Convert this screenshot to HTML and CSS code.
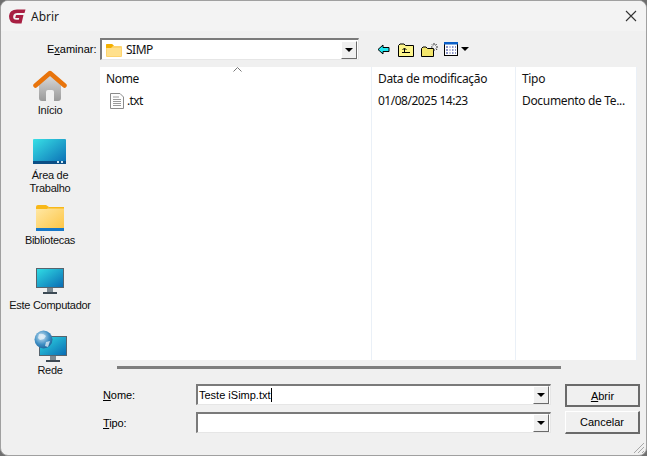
FILE: index.html
```html
<!DOCTYPE html>
<html lang="pt">
<head>
<meta charset="utf-8">
<title>Abrir</title>
<link rel="stylesheet" href="styles.css">
</head>
<body>
<div class="window">
  <header class="titlebar">
    <svg class="app-icon" width="17" height="15" viewBox="0 0 17 15">
      <path d="M16.500 .5H8Q.5 .5 0 7Q0 14.500 7 14.500H12.500L14.500 6H7L6.200 9H10.200L9.800 10.800H7.500Q3.800 10.800 4.200 7.300Q4.800 4 8.500 4H15.500Z" fill="#a81f42"/>
    </svg>
    <span class="title">Abrir</span>
    <svg class="close" width="12" height="12" viewBox="0 0 12 12"><path d="M1 1L11 11M11 1L1 11" stroke="#333" stroke-width="1.1" fill="none"/></svg>
  </header>

  <div class="lookin">
    <label class="lookin-label">E<u>x</u>aminar:</label>
    <div class="combo combo-lookin">
      <svg width="16" height="14" viewBox="0 0 16 14"><path d="M0 2Q0 1 1 1H6L8 3H15Q16 3 16 4V13Q16 14 15 14H1Q0 14 0 13Z" fill="#fdd36e"/><path d="M0 2Q0 1 1 1H6L8 3H7L5 5H0Z" fill="#f4b000"/><path d="M1 5H15V13H1Z" fill="#ffe08c"/></svg>
      <span class="combo-text">SIMP</span>
      <span class="combo-btn"><i></i></span>
    </div>
    <div class="tools">
      <svg width="13" height="11" viewBox="0 0 13 11"><path d="M6 1V3.500H12V7.500H6V10L1 5.500Z" fill="#1fe6f0" stroke="#000"/></svg>
      <svg width="16" height="15" viewBox="0 0 16 15"><path d="M.5 14.500V3.500L2 2H6L7.500 3.500H15.500V14.500Z" fill="#fdf58c" stroke="#000"/><path d="M4 10.500H12M6.500 10.500V6.500M4.500 8L6.500 6L8.500 8" stroke="#000" fill="none"/></svg>
      <svg class="tool-new" width="18" height="15" viewBox="0 0 18 15"><path d="M.5 14.500V6.500L2 5H5L6.500 6.500H12.500V14.500Z" fill="#f3e66c" stroke="#000"/><path d="M13 1V3M13 7V9M10 5H11.500M15 5H17M11 2.500L12 3.500M15.500 2L14.500 3.500M15 6.500L16 8" stroke="#333" fill="none"/></svg>
      <span class="view-tool">
        <svg width="14" height="14" viewBox="0 0 14 14"><rect x=".5" y=".5" width="13" height="13" fill="#fff" stroke="#000"/><rect x="0" y="0" width="14" height="2.500" fill="#0a5fc8"/><path d="M2 5H4M5.500 5H6.500M8 5H9.500M11 5H12M2 8H4M5.500 8H6.500M8 8H9.500M11 8H12M2 11H4M5.500 11H6.500M8 11H9.500M11 11H12" stroke="#1a2c90"/></svg>
        <i></i>
      </span>
    </div>
  </div>

  <div class="middle">
    <nav class="places">
      <div class="place place-home">
        <svg width="34" height="32" viewBox="0 0 34 32">
          <defs><linearGradient id="g1" x1="0" y1="0" x2="0" y2="1"><stop offset="0" stop-color="#dcdcdc"/><stop offset="1" stop-color="#9a9a9a"/></linearGradient></defs>
          <path d="M6 14L17 4L28 14V28Q28 31 25 31H21V22Q21 20 19 20H15Q13 20 13 22V31H9Q6 31 6 28Z" fill="url(#g1)"/>
          <path d="M2.500 15.500L17 3L31.500 15.500" fill="none" stroke="#e8740c" stroke-width="4.500" stroke-linecap="round" stroke-linejoin="round"/>
        </svg>
        <span>Início</span>
      </div>
      <div class="place place-desk">
        <svg width="33" height="25" viewBox="0 0 33 25">
          <defs><linearGradient id="g2" x1="0" y1="0" x2="1" y2="1"><stop offset="0" stop-color="#38e0e6"/><stop offset="1" stop-color="#0a6cb4"/></linearGradient></defs>
          <path d="M1 0H32Q33 0 33 1V25H0V1Q0 0 1 0Z" fill="url(#g2)"/>
          <rect y="22" width="33" height="3" fill="#0b4f86"/>
          <path d="M24 22h2v2h-2zM28 22h2v2h-2z" fill="#cfe8f5"/>
        </svg>
        <span>Área de<br>Trabalho</span>
      </div>
      <div class="place place-lib">
        <svg width="28" height="26" viewBox="0 0 28 26">
          <defs><linearGradient id="g3" x1="0" y1="0" x2="1" y2="1"><stop offset="0" stop-color="#ffe9a8"/><stop offset="1" stop-color="#fdc545"/></linearGradient></defs>
          <path d="M0 2Q0 0 2 0H10L13 2V4H0Z" fill="#f8b818"/>
          <path d="M0 4H11L13 2H28V24H0Z" fill="url(#g3)"/>
          <path d="M11 3.500L13 2H28V3.500Z" fill="#f8b818"/>
          <rect y="23" width="28" height="3" fill="#1878c8"/>
        </svg>
        <span>Bibliotecas</span>
      </div>
      <div class="place place-pc">
        <svg width="28" height="26" viewBox="0 0 28 26">
          <use href="#monitor"/>
        </svg>
        <span>Este Computador</span>
      </div>
      <div class="place place-net">
        <svg width="33" height="32" viewBox="0 0 33 32">
          <defs>
            <linearGradient id="g4" x1="0" y1="0" x2="1" y2="1"><stop offset="0" stop-color="#30dce4"/><stop offset="1" stop-color="#0a6cb4"/></linearGradient>
            <radialGradient id="g5" cx=".4" cy=".35" r=".7"><stop offset="0" stop-color="#cfe6f5"/><stop offset=".6" stop-color="#3f8fc4"/><stop offset="1" stop-color="#1d5f96"/></radialGradient>
            <g id="monitor">
              <rect width="28" height="20" fill="#56646e"/>
              <rect x="1" y="1" width="26" height="18" fill="url(#g4)"/>
              <rect x="11" y="20" width="6" height="4" fill="#7d8a92"/>
              <rect x="7" y="24" width="14" height="2" fill="#3d4a54"/>
            </g>
          </defs>
          <use href="#monitor" x="5" y="6"/>
          <circle cx="9.500" cy="9.500" r="9" fill="url(#g5)"/>
          <path d="M5 4Q9 3 12 6L10 9L6 10L4 8ZM12 12L16 11L14 17L11 16Z" fill="#e8f3fa" opacity=".75"/>
        </svg>
        <span>Rede</span>
      </div>
    </nav>
    <section class="list">
      <div class="cols col-name">
        <svg class="sort" width="9" height="5" viewBox="0 0 9 5"><path d="M.5 4.500L4.500 .5L8.500 4.500" fill="none" stroke="#777"/></svg>
        <div class="col-head">Nome</div>
        <div class="cell file-cell">
          <svg width="14" height="16" viewBox="0 0 14 16"><path d="M.5 .5H10L13.500 4V15.500H.5Z" fill="#fdfdfd" stroke="#8a8a8a"/><path d="M3 4H9M3 6.500H11M3 8.500H11M3 10.500H11M3 12.500H11" stroke="#9a9a9a"/></svg>
          <span>.txt</span>
        </div>
      </div>
      <div class="cols col-date">
        <div class="col-head">Data de modificação</div>
        <div class="cell cell-date">01/08/2025 14:23</div>
      </div>
      <div class="cols col-type">
        <div class="col-head">Tipo</div>
        <div class="cell">Documento de Te...</div>
      </div>
    </section>
  </div>

  <div class="hscroll"></div>

  <div class="form">
    <div class="fields">
      <div class="field">
        <label><u>N</u>ome:</label>
        <div class="combo combo-field"><span class="combo-text input-text">Teste iSimp.txt</span><span class="combo-btn"><i></i></span></div>
      </div>
      <div class="field">
        <label><u>T</u>ipo:</label>
        <div class="combo combo-field"><span class="combo-text"></span><span class="combo-btn"><i></i></span></div>
      </div>
    </div>
    <div class="buttons">
      <button class="btn btn-default" type="button"><u>A</u>brir</button>
      <button class="btn" type="button">Cancelar</button>
    </div>
  </div>
  <svg class="grip" width="12" height="12" viewBox="0 0 12 12"><path d="M11 1L1 11M11 5L5 11M11 9L9 11" stroke="#a8a8a8" fill="none"/></svg>
</div>
</body>
</html>
```
FILE: styles.css
```css
* { box-sizing: border-box; }
html, body { margin: 0; padding: 0; background: #6f6f6f; }
body { width: 647px; height: 456px; overflow: hidden; }
.window {
  position: relative;
  width: 647px;
  height: 456px;
  display: flex;
  flex-direction: column;
  background: #f0f0f0;
  border: 1px solid #a0a0a0;
  border-radius: 8px;
  font: 11px "Liberation Sans", Arial, sans-serif;
  color: #000;
  overflow: hidden;
}
.titlebar {
  height: 30px;
  flex: none;
  display: flex;
  align-items: center;
  padding: 0 9px 0 8px;
  background: #f3f3f3;
}
.app-icon { flex: none; }
.title { margin-left: 5px; font: 12px "Noto Sans", sans-serif; color: #1a1a1a; }
.close { margin-left: auto; }

.lookin {
  height: 22px;
  margin-top: 7px;
  display: flex;
  align-items: center;
  flex: none;
}
.lookin-label { width: 99px; padding-left: 46px; font-size: 11px; }
.combo {
  display: flex;
  align-items: center;
  background: #fff;
  border: 1px solid #e6e6e6;
  border-top: 2px solid #7a7a7a;
  border-left: 2px solid #7a7a7a;
}
.combo-lookin { width: 259px; height: 22px; padding-left: 4px; }
.combo-text { flex: 1; font-size: 11px; padding-left: 1px; }
.combo-lookin .combo-text { font: 12px "Noto Sans", sans-serif; color: #111; padding-left: 4px; letter-spacing: -.5px; }
.combo-btn {
  flex: none;
  width: 16px;
  height: 18px;
  margin-right: 1px;
  display: flex;
  align-items: center;
  justify-content: center;
  background: #f0f0f0;
  border: 1px solid #fff;
  border-right-color: #6a6a6a;
  border-bottom-color: #6a6a6a;
}
.combo-btn i, .view-tool i {
  display: block;
  width: 0;
  height: 0;
  border: 4px solid transparent;
  border-top: 4px solid #000;
  border-bottom: 0;
}
.tools {
  display: flex;
  align-items: center;
  margin-left: 18px;
  gap: 8px;
}
.tool-new { margin-left: -1px; }
.view-tool { display: flex; align-items: center; gap: 3px; margin-left: -3px; }

.middle {
  display: flex;
  height: 293px;
  margin-top: 7px;
  flex: none;
  overflow: visible;
}
.places {
  width: 99px;
  flex: none;
  display: flex;
  flex-direction: column;
  align-items: center;
  text-align: center;
  padding: 3px 1px 0 0;
  height: 320px;
}
.place { display: flex; flex-direction: column; align-items: center; line-height: 13px; white-space: nowrap; letter-spacing: -.27px; }
.place svg { display: block; }
.place span { margin-top: 2px; color: #111; }
.place-desk { margin-top: 22px; }
.place-desk span { margin-top: 5px; }
.place-lib { margin-top: 10px; }
.place-lib span { margin-top: 3px; }
.place-pc { margin-top: 21px; }
.place-pc span { margin-top: 5px; }
.place-net { margin-top: 18px; }
.place-net span { margin-top: 2px; }

.list {
  width: 537px;
  flex: none;
  display: flex;
  background: #fff;
  font: 12px "Noto Sans", sans-serif;
  color: #111;
  position: relative;
}
.cols { flex: none; border-right: 1px solid #eaf0f7; padding-left: 6px; position: relative; letter-spacing: -.33px; }
.col-name { width: 272px; }
.col-date { width: 144px; }
.col-type { width: 121px; }
.col-head { height: 24px; padding-top: 3px; line-height: 17px; white-space: nowrap; }
.cell { height: 20px; line-height: 20px; white-space: nowrap; }
.cell-date { letter-spacing: -.5px; }
.file-cell { display: flex; align-items: center; gap: 3px; padding-left: 4px; letter-spacing: -.6px; }
.sort { position: absolute; left: 133px; top: 0; }

.hscroll { height: 3px; flex: none; margin: 6px 0 0 116px; width: 444px; background: #7e7e7e; }

.form { position: relative; display: flex; margin-top: 15px; flex: none; }
.fields { width: 550px; display: flex; flex-direction: column; gap: 8px; }
.field { display: flex; align-items: center; height: 20px; }
.field label { width: 195px; padding: 2px 0 0 102px; font-size: 11px; letter-spacing: -.1px; }
.combo-field { width: 355px; height: 21px; }
.input-text { line-height: 16px; }
.input-text::after { content: ""; display: inline-block; width: 1px; height: 14px; background: #000; vertical-align: -3px; }
.buttons { margin-left: 14px; display: flex; flex-direction: column; gap: 4px; margin-top: 0; }
.btn {
  width: 75px;
  height: 23px;
  padding: 0;
  font: 11px "Liberation Sans", Arial, sans-serif;
  color: #000;
  background: #f0f0f0;
  border: 1px solid #fff;
  border-right: 2px solid #6a6a6a;
  border-bottom: 2px solid #6a6a6a;
}
.btn-default { border: 2px solid #6a6a6a; }
.grip { position: absolute; right: 1px; bottom: 1px; }
```
